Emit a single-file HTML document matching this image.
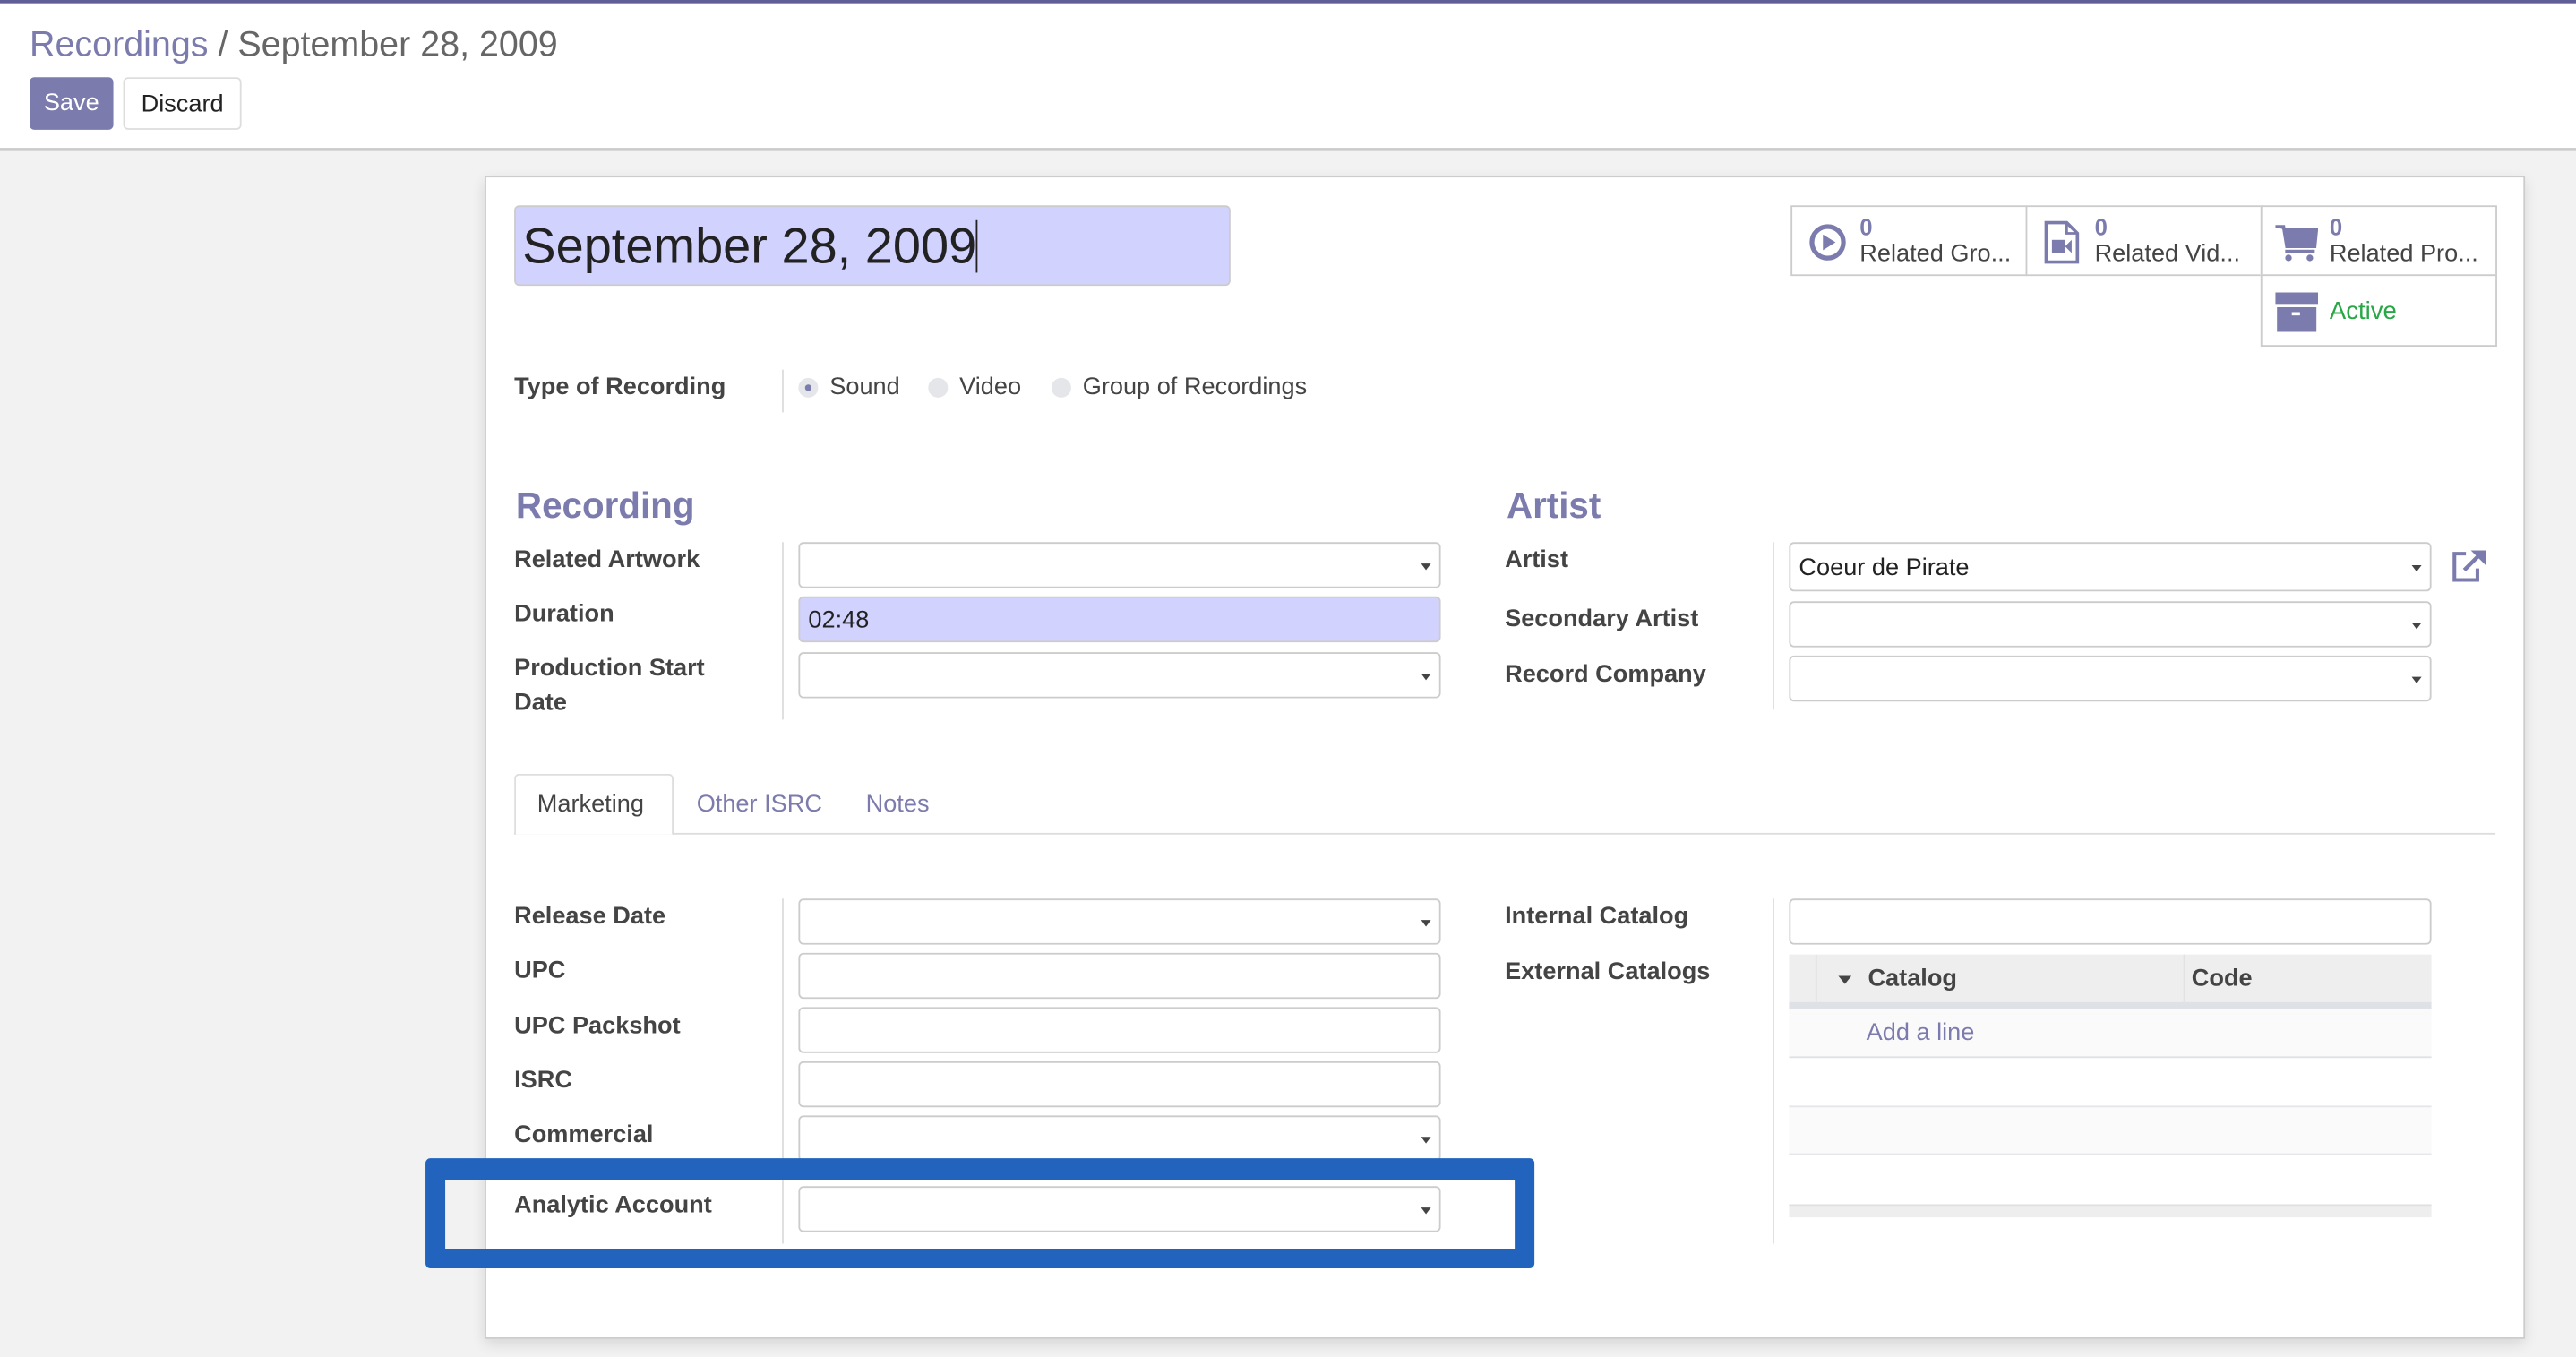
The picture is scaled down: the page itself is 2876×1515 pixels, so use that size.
<!DOCTYPE html>
<html><head><meta charset="utf-8"><style>
html,body{margin:0;padding:0;width:2876px;height:1514px;overflow:hidden;background:#f2f2f2;}
#w{position:absolute;left:0;top:0;width:1568px;height:826px;transform:scale(1.83418);transform-origin:0 0;font-family:"Liberation Sans",sans-serif;color:#444;}
.a{position:absolute;}
.lbl{position:absolute;font-weight:bold;font-size:14.8px;color:#444;line-height:21px;}
.inp{position:absolute;background:#fff;border:1px solid #ccc;border-radius:3px;box-sizing:border-box;}
.car{position:absolute;right:5px;top:50%;margin-top:-1px;width:0;height:0;border-left:3.5px solid transparent;border-right:3.5px solid transparent;border-top:4px solid #444;}
.sep{position:absolute;width:1px;background:#ddd;}
.bb{position:absolute;border:1px solid #ccc;box-sizing:border-box;background:#fff;}
.bn{position:absolute;left:41px;top:4px;font-size:14px;color:#7c7bad;font-weight:bold;}
.bt{position:absolute;left:41px;top:21px;font-size:14.8px;color:#444;white-space:nowrap;}
.t{position:absolute;font-size:14.8px;}
</style></head><body><div id="w">
<div class="a" style="left:0;top:0;width:1568px;height:92px;background:#fff;border-top:2px solid #5f5e97;box-sizing:border-box;"></div>
<div class="a" style="left:0;top:90px;width:1568px;height:2px;background:#ccc;"></div>
<div class="a" style="left:18px;top:15px;font-size:21.5px;white-space:nowrap;"><span style="color:#7c7bad">Recordings</span><span style="color:#666"> / September 28, 2009</span></div>
<div class="a" style="left:18px;top:47px;width:51px;height:32px;background:#7c7bad;border-radius:3px;color:#fff;font-size:14.8px;text-align:center;line-height:33px;">Save</div>
<div class="a" style="left:75px;top:47px;width:72px;height:32px;background:#fff;border:1px solid #ddd;box-sizing:border-box;border-radius:3px;color:#222;font-size:14.8px;text-align:center;line-height:32px;">Discard</div>

<div class="a" style="left:295px;top:107px;width:1242px;height:708px;background:#fff;border:1px solid #ccc;box-sizing:border-box;box-shadow:0 3px 8px rgba(0,0,0,.12);"></div>

<div class="a" style="left:313px;top:125px;width:436px;height:49px;background:#d2d2ff;border:1px solid #ccc;border-radius:3px;box-sizing:border-box;"></div>
<div class="a" style="left:318px;top:132px;font-size:30.5px;color:#222;white-space:nowrap;line-height:36px;">September 28, 2009<span style="display:inline-block;width:1px;height:32px;background:#222;vertical-align:-6px;"></span></div>

<div class="bb" style="left:1090px;top:125px;width:144px;height:43px;"><svg class="a" style="left:10px;top:10px" width="23" height="23" viewBox="0 0 24 24"><circle cx="12" cy="12" r="10" fill="none" stroke="#7c7bad" stroke-width="3"/><path d="M9 7 L17 12 L9 17Z" fill="#7c7bad"/></svg><div class="bn">0</div><div class="bt">Related Gro...</div></div>
<div class="bb" style="left:1233px;top:125px;width:144px;height:43px;"><svg class="a" style="left:10px;top:8px" width="22" height="27" viewBox="0 0 22 27"><path d="M1.5 1.5 H14 L20.5 8 V25.5 H1.5Z" fill="none" stroke="#7c7bad" stroke-width="2"/><path d="M14 1.5 V8 H20.5" fill="none" stroke="#7c7bad" stroke-width="1.5"/><rect x="5" y="12" width="8" height="8" fill="#7c7bad"/><path d="M13 16 L17 12 V20Z" fill="#7c7bad"/></svg><div class="bn">0</div><div class="bt">Related Vid...</div></div>
<div class="bb" style="left:1376px;top:125px;width:144px;height:43px;"><svg class="a" style="left:8px;top:10px" width="26" height="24" viewBox="0 0 26 24"><path d="M0 2 H5 L7 14 H24 L25 4 H6" fill="#7c7bad" stroke="#7c7bad" stroke-width="2"/><rect x="6" y="16" width="18" height="2" fill="#7c7bad"/><circle cx="8" cy="21" r="2" fill="#7c7bad"/><circle cx="21" cy="21" r="2" fill="#7c7bad"/></svg><div class="bn">0</div><div class="bt">Related Pro...</div></div>
<div class="bb" style="left:1376px;top:167px;width:144px;height:44px;"><svg class="a" style="left:8px;top:10px" width="26" height="24" viewBox="0 0 26 24"><rect x="0" y="0" width="26" height="7" fill="#7c7bad"/><rect x="1" y="9" width="24" height="15" fill="#7c7bad"/><rect x="10" y="12" width="5" height="2" fill="#fff"/></svg><div class="a" style="left:41px;top:13px;font-size:15px;color:#28a745;">Active</div></div>

<div class="lbl" style="left:313px;top:226px;">Type of Recording</div>
<div class="sep" style="left:476px;top:225px;height:26px;"></div>
<div class="a" style="left:486px;top:230px;width:12px;height:12px;border-radius:50%;background:#e4e6ea;"></div><div class="a" style="left:490px;top:234px;width:4px;height:4px;border-radius:50%;background:#7c7bad;"></div>
<div class="t" style="left:505px;top:228px;">Sound</div>
<div class="a" style="left:565px;top:230px;width:12px;height:12px;border-radius:50%;background:#e4e6ea;"></div>
<div class="t" style="left:584px;top:228px;">Video</div>
<div class="a" style="left:640px;top:230px;width:12px;height:12px;border-radius:50%;background:#e4e6ea;"></div>
<div class="t" style="left:659px;top:228px;">Group of Recordings</div>

<div class="a" style="left:314px;top:295px;font-size:22px;font-weight:bold;color:#7c7bad;">Recording</div>
<div class="a" style="left:917px;top:295px;font-size:22px;font-weight:bold;color:#7c7bad;">Artist</div>

<div class="sep" style="left:476px;top:330px;height:108px;"></div>
<div class="lbl" style="left:313px;top:331px;">Related Artwork</div>
<div class="inp" style="left:486px;top:330px;width:391px;height:28px;"><div class="car"></div></div>
<div class="lbl" style="left:313px;top:364px;">Duration</div>
<div class="inp" style="left:486px;top:363px;width:391px;height:28px;background:#d2d2ff;font-size:14.8px;color:#222;padding:6px 0 0 5px;">02:48</div>
<div class="lbl" style="left:313px;top:397px;line-height:21px;">Production Start<br>Date</div>
<div class="inp" style="left:486px;top:397px;width:391px;height:28px;"><div class="car"></div></div>

<div class="sep" style="left:1079px;top:330px;height:102px;"></div>
<div class="lbl" style="left:916px;top:331px;">Artist</div>
<div class="inp" style="left:1089px;top:330px;width:391px;height:30px;font-size:14.8px;color:#222;padding:7px 0 0 5px;">Coeur de Pirate<div class="car"></div></div>
<svg class="a" style="left:1492px;top:334px" width="22" height="21" viewBox="0 0 22 21"><path d="M9 3 H2 V19 H16 V12" fill="none" stroke="#7c7bad" stroke-width="2.2"/><path d="M8 13 L19 2" stroke="#7c7bad" stroke-width="2.4"/><path d="M12 1 H21 V10Z" fill="#7c7bad"/></svg>
<div class="lbl" style="left:916px;top:367px;">Secondary Artist</div>
<div class="inp" style="left:1089px;top:366px;width:391px;height:28px;"><div class="car"></div></div>
<div class="lbl" style="left:916px;top:401px;">Record Company</div>
<div class="inp" style="left:1089px;top:399px;width:391px;height:28px;"><div class="car"></div></div>

<div class="a" style="left:313px;top:507px;width:1206px;height:1px;background:#ddd;"></div>
<div class="a" style="left:313px;top:471px;width:97px;height:37px;background:#fff;border:1px solid #ddd;border-bottom:none;box-sizing:border-box;border-radius:3px 3px 0 0;"></div>
<div class="t" style="left:327px;top:482px;color:#444;">Marketing</div>
<div class="t" style="left:424px;top:482px;color:#7c7bad;">Other ISRC</div>
<div class="t" style="left:527px;top:482px;color:#7c7bad;">Notes</div>

<div class="sep" style="left:476px;top:547px;height:210px;"></div>
<div class="lbl" style="left:313px;top:548px;">Release Date</div>
<div class="inp" style="left:486px;top:547px;width:391px;height:28px;"><div class="car"></div></div>
<div class="lbl" style="left:313px;top:581px;">UPC</div>
<div class="inp" style="left:486px;top:580px;width:391px;height:28px;"></div>
<div class="lbl" style="left:313px;top:615px;">UPC Packshot</div>
<div class="inp" style="left:486px;top:613px;width:391px;height:28px;"></div>
<div class="lbl" style="left:313px;top:648px;">ISRC</div>
<div class="inp" style="left:486px;top:646px;width:391px;height:28px;"></div>
<div class="lbl" style="left:313px;top:681px;">Commercial</div>
<div class="inp" style="left:486px;top:679px;width:391px;height:28px;"><div class="car"></div></div>
<div class="lbl" style="left:313px;top:724px;">Analytic Account</div>
<div class="inp" style="left:486px;top:722px;width:391px;height:28px;"><div class="car"></div></div>

<div class="sep" style="left:1079px;top:547px;height:210px;"></div>
<div class="lbl" style="left:916px;top:548px;">Internal Catalog</div>
<div class="inp" style="left:1089px;top:547px;width:391px;height:28px;"></div>
<div class="lbl" style="left:916px;top:582px;">External Catalogs</div>
<div class="a" style="left:1089px;top:581px;width:391px;height:30px;background:#eee;"></div>
<div class="a" style="left:1089px;top:610px;width:391px;height:4px;background:#dee2e6;"></div>
<div class="a" style="left:1105px;top:581px;width:1px;height:30px;background:#e2e2e2;"></div>
<div class="a" style="left:1329px;top:581px;width:1px;height:30px;background:#e2e2e2;"></div>
<div class="a" style="left:1119px;top:594px;width:0;height:0;border-left:4px solid transparent;border-right:4px solid transparent;border-top:5px solid #444;"></div>
<div class="a" style="left:1137px;top:588px;font-size:14.8px;font-weight:bold;color:#444;">Catalog</div>
<div class="a" style="left:1334px;top:588px;font-size:14.8px;font-weight:bold;color:#444;">Code</div>
<div class="a" style="left:1089px;top:614px;width:391px;height:29px;background:#fafafa;border-bottom:1px solid #dee2e6;"></div>
<div class="t" style="left:1136px;top:621px;color:#7c7bad;">Add a line</div>
<div class="a" style="left:1089px;top:673px;width:391px;height:30px;background:#fafafa;border-top:1px solid #e4e6ea;border-bottom:1px solid #e4e6ea;box-sizing:border-box;"></div>
<div class="a" style="left:1089px;top:733px;width:391px;height:8px;background:#eee;border-top:1px solid #e0e0e0;box-sizing:border-box;"></div>

<div class="a" style="left:259px;top:705px;width:675px;height:67px;border:12px solid #2163bd;border-top-width:13px;border-radius:3px;box-sizing:border-box;"></div>
</div></body></html>
